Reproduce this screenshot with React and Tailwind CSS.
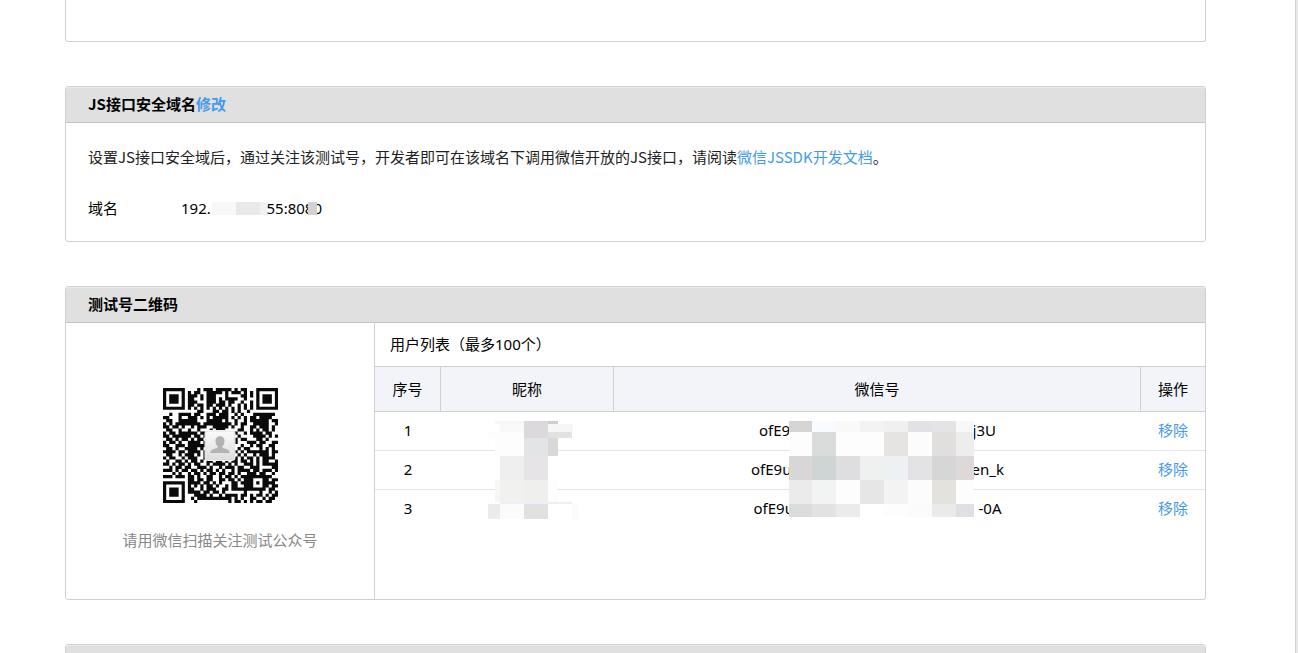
import React from "react";

const QR_ROWS = [
  "1111111000010111011111010110001111111",
  "1000001010110011111010111010101000001",
  "1011101011101011100010000110101011101",
  "1011101011001011101011110010001011101",
  "1011101011100011101101100100101011101",
  "1000001011011011011101001010101000001",
  "1111111010101010101010101010101111111",
  "0000000000011000110110101001000000000",
  "0010011110110011101110010100011111110",
  "1100010011101010111110101010110111100",
  "0110011111100011111010010010111111011",
  "1010111111110111111111010110011111001",
  "1101101001011100111110100100110111010",
  "0110010010010001011100001100101011010",
  "1011011111101100000000010010111101100",
  "1101111110110100000000101000011110101",
  "0110101101011000000000110110001101000",
  "1011010011110100000000010001110110011",
  "1100111011111100000000100100101100110",
  "0110100111101000000000101011000101010",
  "1111011011110100000000010101111111011",
  "0110010111010100000000101010010111010",
  "1011001011100100000000010101101011110",
  "0100110101101011011010110110101011001",
  "1101011010110010111101010011101011111",
  "0010110110011101001011101100111000011",
  "1110101101101011010100101111011011101",
  "0001010010110101101101101001110110010",
  "1110111011010011001011010111111111100",
  "0000000011011011001101101011000111011",
  "1111111011110110101000110111010111110",
  "1000001010101011010010110011000111011",
  "1011101011001011100110111111111110110",
  "1011101011110110110100000010000100101",
  "1011101000111101001011110110101101011",
  "1000001001011111111111010100110010110",
  "1111111000100000000001011010101101100",
];

const FINDERS = [[0, 0], [30, 0], [0, 30]];

function isDark(x, y) {
  for (const [fx, fy] of FINDERS) {
    const ring = Math.max(Math.abs(x - fx - 3), Math.abs(y - fy - 3));
    if (ring <= 4) return ring !== 2 && ring !== 4;
  }
  const align = Math.max(Math.abs(x - 30), Math.abs(y - 30));
  if (align <= 2) return align !== 1;
  return QR_ROWS[y][x] === "1";
}

const QR_PATH = QR_ROWS.map((row, y) =>
  [...row].map((_, x) => (isDark(x, y) ? `M${x} ${y}h1.03v1.03h-1.03z` : "")).join("")
).join("");

const USERS = [
  { id: 1, head: "ofE9u", tail: "j3U", width: "w-[237px]" },
  { id: 2, head: "ofE9u", tail: "en_k", width: "w-[253px]" },
  { id: 3, head: "ofE9u", tail: "-0A", width: "w-[248px]" },
];

// [x, y, width, height, fill]
const NICK_MASK = [
  [7, 0, 29, 3, "#f7f7f7"], [36, 0, 24, 17, "#dbd9dc"], [60, 0, 10, 3, "#cfcfcf"],
  [12, 3, 24, 8, "#f9f9fa"], [60, 3, 25, 8, "#f5f6f8"], [0, 11, 36, 6, "#fdfdfd"],
  [60, 11, 24, 6, "#e2e2e2"], [7, 17, 29, 18, "#fdfdfd"], [36, 17, 24, 18, "#e3e4e8"],
  [60, 17, 10, 18, "#dad8d7"], [12, 35, 24, 24, "#efefef"], [36, 35, 24, 24, "#e6e4e6"],
  [7, 59, 5, 22, "#f6f6f4"], [12, 59, 24, 22, "#f1f1f0"],
  [36, 59, 24, 22, "#efefed"], [60, 59, 10, 22, "#fdfdfd"], [12, 81, 72, 2, "#eeeef6"],
  [0, 83, 12, 15, "#ebebea"], [12, 83, 24, 15, "#fbfbfc"], [36, 83, 24, 15, "#e1e1e0"],
  [60, 83, 24, 15, "#ffffff"], [84, 82, 6, 16, "#fafbff"],
];

const ID_X = [0, 23, 47, 71, 95, 119, 143, 167, 185];
const ID_Y = [0, 11, 35, 59, 83, 96];
const ID_FILL = [
  ["#d6d5d3", "#f8fbff", "#f9f9f9", "#f3f3f3", "#f0f0f0", "#e2e2e4", "#e3e4e6", "#f8f8f8"],
  ["#fdfdfd", "#d9dcdb", "#fdfdfd", "#fdfdfd", "#e5e4e2", "#fcfcfc", "#e0dfdd", "#ededed"],
  ["#d8d6d7", "#cfd4d4", "#dedee0", "#eef1f0", "#edf1f3", "#e3e2e4", "#d6d6d6", "#ded9d9"],
  ["#ebebeb", "#f2f4f3", "#fdfdfd", "#e6e6e6", "#f3f3f3", "#fcfcfc", "#e3e2dd", "#fdfdfd"],
  ["#dadddc", "#e2e2e2", "#ebebea", "#ffffff", "#fdfdfb", "#fbfbfb", "#eaeaea", "#e0dfe3"],
];

function NickMask() {
  return (
    <svg width="90" height="98" viewBox="0 0 90 98" shapeRendering="crispEdges" aria-hidden="true"
      className="absolute left-[47px] top-[9px] z-10">
      {NICK_MASK.map(([x, y, w, h, fill]) => (
        <rect key={`${x}-${y}`} x={x} y={y} width={w} height={h} fill={fill} />
      ))}
    </svg>
  );
}

function IdMask() {
  return (
    <svg width="185" height="96" viewBox="0 0 185 96" shapeRendering="crispEdges" aria-hidden="true"
      className="absolute left-[175px] top-[9px] z-10">
      {ID_FILL.map((row, r) =>
        row.map((fill, c) => (
          <rect key={`${r}-${c}`} x={ID_X[c]} y={ID_Y[r]} width={ID_X[c + 1] - ID_X[c]}
            height={ID_Y[r + 1] - ID_Y[r]} fill={fill} />
        ))
      )}
    </svg>
  );
}

function QrCode() {
  return (
    <svg width="115" height="115" viewBox="0 0 115 115" role="img" aria-label="测试号二维码">
      <defs>
        <linearGradient id="avatar" x1="0" y1="0" x2="0" y2="1">
          <stop offset="0" stopColor="#fafafa" />
          <stop offset="1" stopColor="#dedede" />
        </linearGradient>
      </defs>
      <g transform="scale(3.108)">
        <path d={QR_PATH} fill="#0a0a0a" />
      </g>
      <rect x="41.500" y="42" width="31" height="31" rx="4" fill="#fff" />
      <rect x="42.500" y="43" width="29" height="29" rx="3" fill="url(#avatar)" stroke="#d4d4d4" strokeWidth="0.6" />
      <path d="M57 48.300c-3 0-4.700 2.200-4.500 5.200.1 2.200.9 4 2.300 5-.2 1.700-1.500 1.800-4 2.600-2.400.8-3.300 1.700-3.500 4h19.400c-.2-2.300-1.100-3.200-3.500-4-2.500-.8-3.800-.9-4-2.600 1.400-1 2.200-2.800 2.300-5 .2-3-1.500-5.200-4.500-5.200z" fill="#b3b3b3" />
    </svg>
  );
}

function Panel({ title, action, children }) {
  return (
    <section className="rounded-[3px] border border-[#d0d0d0] bg-white">
      <h2 className="flex h-9 items-center rounded-t-[2px] border-b border-[#c4c4c4] bg-[#e0e0e0] px-[22px] pb-[2px] font-['Noto_Sans_CJK_SC',sans-serif] font-bold shadow-[inset_0_1px_0_#ececec]">
        {title}
        {action}
      </h2>
      {children}
    </section>
  );
}

export default function App() {
  return (
    <div className="flex h-screen overflow-hidden bg-white font-['Noto_Sans','Noto_Sans_CJK_SC',sans-serif] text-[15px] leading-6 text-black">
      <main className="flex min-w-0 flex-1 flex-col gap-11 pl-[65px] pr-[89px]">
        <section className="h-[42px] shrink-0 rounded-b-[3px] border border-t-0 border-[#d0d0d0]" />

        <Panel title="JS接口安全域名" action={<a href="#edit" className="text-[#459ae9]">修改</a>}>
          <div className="px-[22px] pb-[21px] pt-[22px]">
            <p className="font-['Noto_Sans_CJK_SC',sans-serif] text-[#222]">
              设置JS接口安全域后，通过关注该测试号，开发者即可在该域名下调用微信开放的JS接口，请阅读
              <a href="#jssdk" className="text-[#459ae9]">微信JSSDK开发文档</a>。
            </p>
            <dl className="mt-[27px] flex">
              <dt className="w-[93px]">域名</dt>
              <dd className="relative flex w-[141px] justify-between">
                <span>192.</span>
                <span>55:8080</span>
                <svg width="110" height="13" viewBox="0 0 110 13" shapeRendering="crispEdges" aria-hidden="true"
                  className="absolute left-[31px] top-[6px]">
                  <rect width="24" height="13" fill="#f8f8f8" />
                  <rect x="24" width="24" height="13" fill="#e9e9e9" />
                  <rect x="48" width="7" height="13" fill="#f2f2f2" />
                  <rect x="96" width="9" height="13" fill="#d2d2d2" />
                </svg>
              </dd>
            </dl>
          </div>
        </Panel>

        <Panel title="测试号二维码">
          <div className="flex">
            <div className="flex w-[309px] shrink-0 flex-col items-center border-r border-[#d0d0d0] pb-[47px] pt-[65px]">
              <QrCode />
              <p className="mt-[25px] text-[#888]">请用微信扫描关注测试公众号</p>
            </div>
            <div className="min-w-0 flex-1">
              <h3 className="flex h-11 items-center border-b border-[#d0d0d0] px-[15px] pb-[2px]">用户列表（最多100个）</h3>
              <table className="w-full table-fixed border-separate border-spacing-0 text-center">
                <thead>
                  <tr className="h-[45px] bg-[#f3f4f9]">
                    <th className="w-[66px] border-b border-r border-[#d0d0d0] font-normal">序号</th>
                    <th className="w-[173px] border-b border-r border-[#d0d0d0] font-normal">昵称</th>
                    <th className="border-b border-r border-[#d0d0d0] font-normal">微信号</th>
                    <th className="w-[64px] border-b border-[#d0d0d0] font-normal">操作</th>
                  </tr>
                </thead>
                <tbody className="[&>tr:not(:last-child)>td]:border-b [&>tr>td]:border-[#e4e4e4] [&>tr>td]:pb-[2px]">
                  {USERS.map((user, index) => (
                    <tr key={user.id} className="h-[39px] last:h-[37px]">
                      <td>{user.id}</td>
                      <td className="relative">{index === 0 && <NickMask />}</td>
                      <td className="relative">
                        <div className={`mx-auto flex justify-between ${user.width}`}>
                          <span>{user.head}</span>
                          <span>{user.tail}</span>
                        </div>
                        {index === 0 && <IdMask />}
                      </td>
                      <td><a href={`#remove-${user.id}`} className="text-[#459ae9]">移除</a></td>
                    </tr>
                  ))}
                </tbody>
              </table>
            </div>
          </div>
        </Panel>

        <Panel />
      </main>
      <div className="w-[3px] shrink-0 border-l border-[#d0d0d0] bg-[#e8e8e8]" />
    </div>
  );
}
